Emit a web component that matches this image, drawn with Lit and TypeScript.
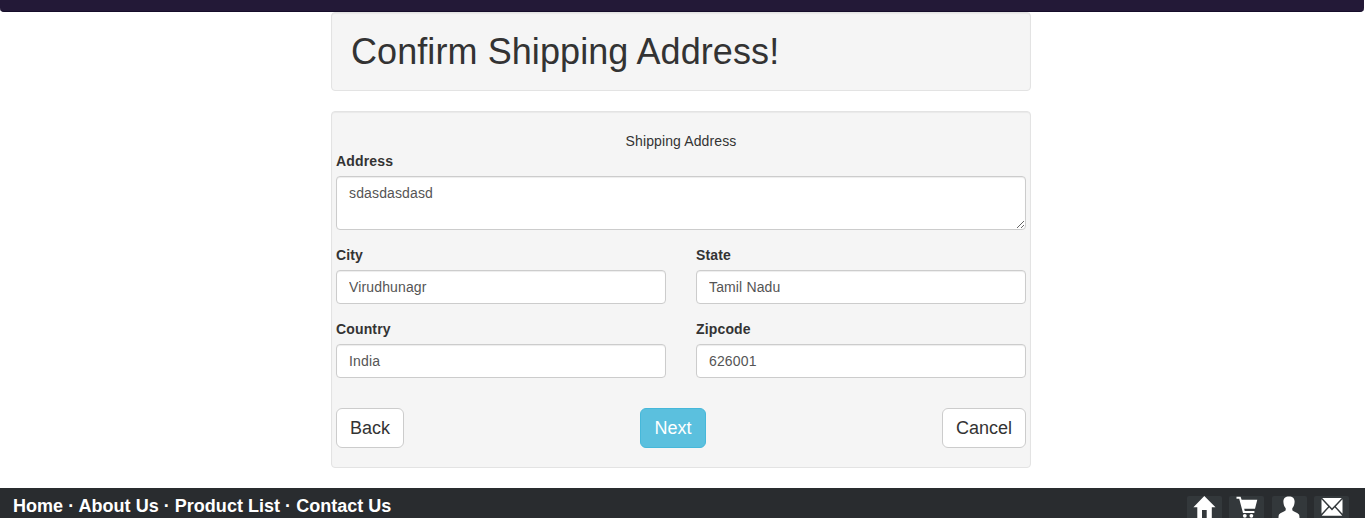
import { LitElement, html, css, svg } from "lit";
import { customElement } from "lit/decorators.js";

const ICONS = [
  svg`<path d="M11.3 0 L22.5 11.3 H18.8 V24 H13.7 V14 H9 V24 H4.3 V11.3 H0.4 Z"/>`,
  svg`<path d="M0.5 0.8 H4.6 L5.6 3.8 H21.3 L19 12.8 H8.2 L8.7 15 H18.4 V17 H7 L3.2 2.8 H0.5 Z"/><circle cx="8.8" cy="19.8" r="1.9"/><circle cx="15.4" cy="19.8" r="1.9"/>`,
  svg`<path d="M11 0.6 C14.8 0.6 16.8 2.8 16.6 6 C16.4 9 15.6 10.8 14.3 12.2 V14.2 C15.4 15.8 19.8 16.6 21 18.6 C21.7 20 21.5 24 21.5 24 H0.5 C0.5 24 0.3 20 1 18.6 C2.2 16.6 6.6 15.8 7.7 14.2 V12.2 C6.4 10.8 5.6 9 5.4 6 C5.2 2.8 7.2 0.6 11 0.6 Z"/>`,
  svg`<path d="M1.2 2 H20.8 L11 12.3 Z M0.5 3.2 L7.2 10.4 L0.5 17.8 Z M21.5 3.2 L14.8 10.4 L21.5 17.8 Z M8.2 11.4 L11 14.4 L13.8 11.4 L21.3 19.8 H0.7 Z"/>`,
];

@customElement("app-root")
export class AppRoot extends LitElement {
  static styles = css`
    :host { display: flex; flex-direction: column; height: 518px; overflow: hidden; background: #fff; color: #333; font: 14px/20px "Liberation Sans", Arial, sans-serif; }
    * { box-sizing: border-box; }
    .top { flex: none; height: 12px; width: 1364px; background: #231937; border-bottom: 1px solid #150d2a; border-radius: 0 0 4px 4px; }
    main { width: 700px; margin-left: 331px; flex: none; }
    .well { background: #f5f5f5; border: 1px solid #e3e3e3; border-radius: 4px; box-shadow: inset 0 1px 1px rgba(0,0,0,.05); margin-bottom: 20px; }
    .title { height: 79px; padding: 19px; }
    h1 { margin: 0; font-size: 36px; line-height: 39px; font-weight: 400; white-space: nowrap; letter-spacing: .08px; }
    .form { height: 357px; padding: 19px 4px; }
    .caption { text-align: center; letter-spacing: .12px; }
    .grid { display: grid; grid-template-columns: 330px 330px; column-gap: 30px; row-gap: 15px; }
    .wide { grid-column: span 2; }
    label { display: block; font-weight: 700; margin-bottom: 5px; letter-spacing: .15px; }
    input, textarea { display: block; width: 100%; height: 34px; margin: 0; padding: 6px 12px; border: 1px solid #ccc; border-radius: 4px; background: #fff; color: #555; font: inherit; letter-spacing: .14px; box-shadow: inset 0 1px 1px rgba(0,0,0,.075); outline: 0; }
    textarea { height: 54px; overflow: auto; }
    .actions { display: flex; justify-content: space-between; margin-top: 30px; }
    button { height: 40px; padding: 0; border: 1px solid #ccc; border-radius: 6px; background: #fff; color: #333; font: 18px/24px "Liberation Sans", Arial, sans-serif; }
    .back { width: 68px; }
    .next { width: 66px; color: #fff; background: #5bc0de; border-color: #46b8da; }
    .cancel { width: 84px; }
    footer { flex: none; height: 60px; background: #292c2f; display: flex; justify-content: space-between; padding: 8px 16px 0 13px; }
    nav { font-size: 18px; font-weight: 700; line-height: 20px; color: #fff; white-space: nowrap; letter-spacing: .025px; }
    .icons { display: flex; gap: 7.4px; }
    .icon { width: 35px; height: 35px; background: #33383b; border-radius: 2px; display: flex; justify-content: center; }
    svg { width: 22px; height: 24px; fill: #fff; overflow: visible; }
  `;

  field(name: string, value: string) {
    return html`<div><label>${name}</label><input .value=${value} /></div>`;
  }

  render() {
    return html`
      <div class="top"></div>
      <main>
        <div class="well title"><h1>Confirm Shipping Address!</h1></div>
        <div class="well form">
          <div class="caption">Shipping Address</div>
          <div class="grid">
            <div class="wide"><label>Address</label><textarea .value=${"sdasdasdasd"}></textarea></div>
            ${this.field("City", "Virudhunagr")}${this.field("State", "Tamil Nadu")}
            ${this.field("Country", "India")}${this.field("Zipcode", "626001")}
          </div>
          <div class="actions"><button class="back">Back</button><button class="next">Next</button><button class="cancel">Cancel</button></div>
        </div>
      </main>
      <footer>
        <nav>Home · About Us · Product List · Contact Us</nav>
        <div class="icons">${ICONS.map((i) => html`<div class="icon"><svg viewBox="0 0 22 24">${i}</svg></div>`)}</div>
      </footer>`;
  }
}
